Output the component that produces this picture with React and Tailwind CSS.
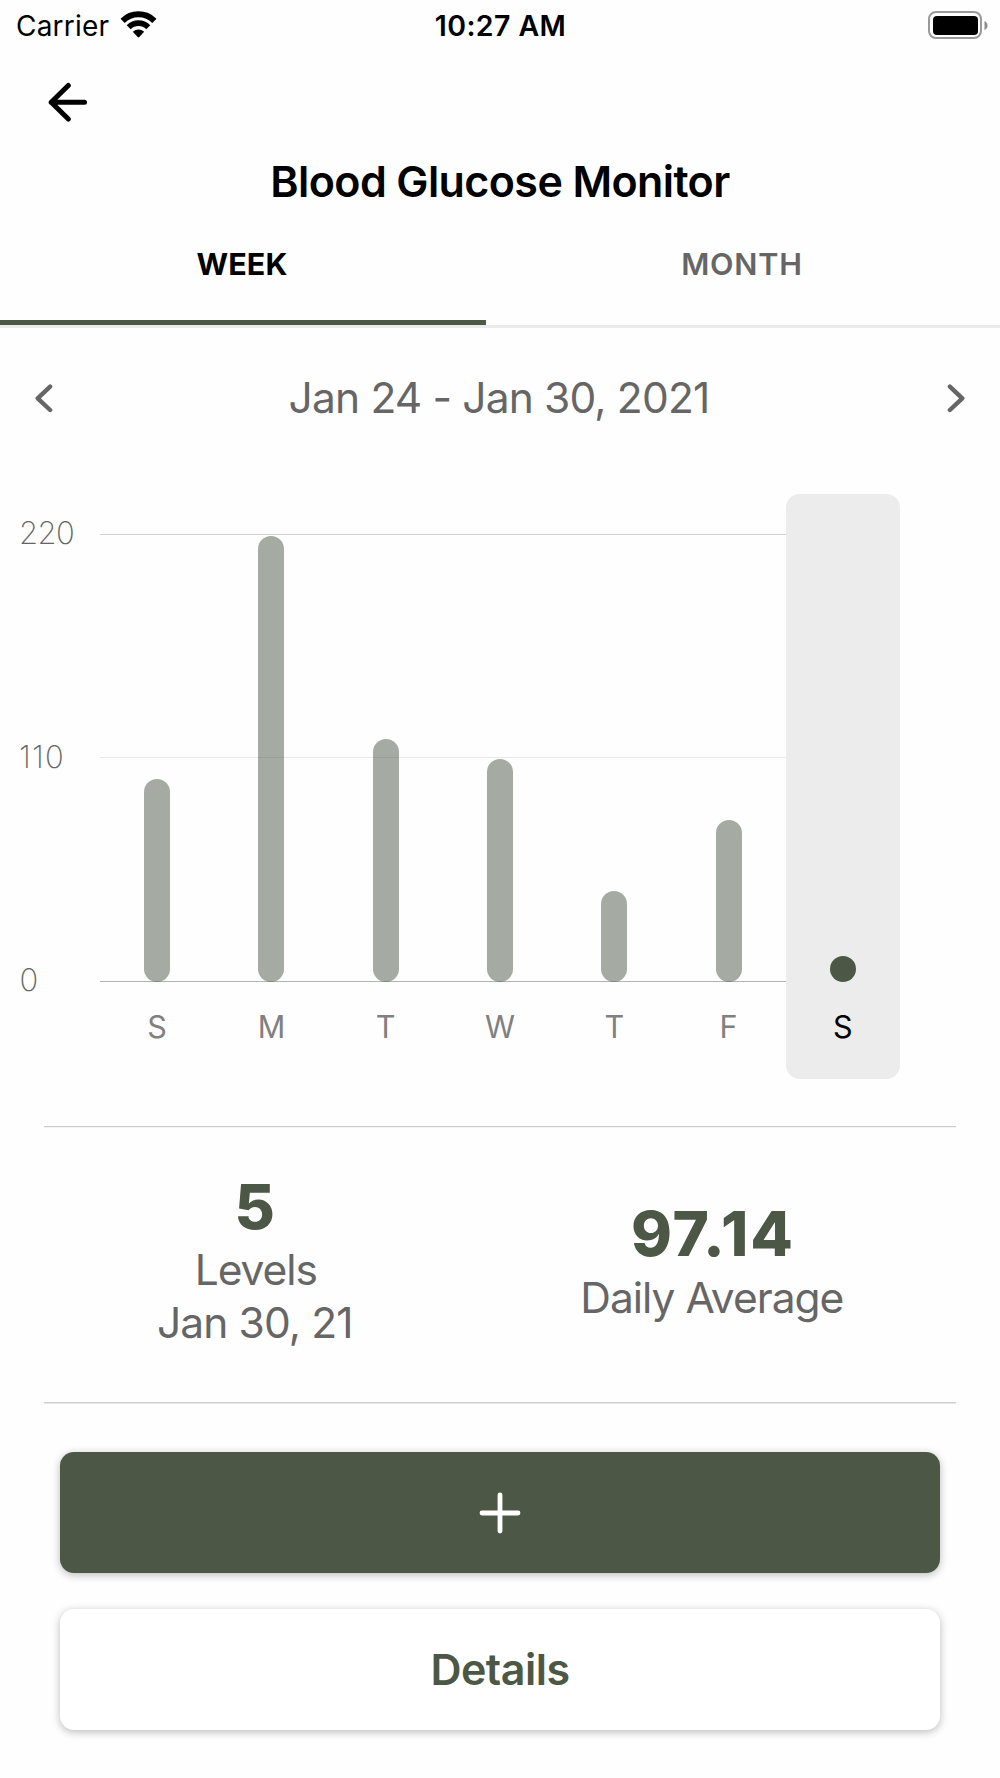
import React from 'react';

const days = [
  { label: 'S', height: 203 },
  { label: 'M', height: 446.5 },
  { label: 'T', height: 243 },
  { label: 'W', height: 223 },
  { label: 'T', height: 91 },
  { label: 'F', height: 162 },
  { label: 'S', height: 26, selected: true },
];

function WifiIcon() {
  return (
    <svg className="ml-[11px] mb-[3px] h-[27px] w-[37px]" viewBox="0 0 37 27" fill="none">
      <path d="M2.6 9.8 A22.6 22.6 0 0 1 34.4 9.8" stroke="#000" strokeWidth="5.9" />
      <path d="M8.7 16.2 A13.8 13.8 0 0 1 28.3 16.2" stroke="#000" strokeWidth="5.6" />
      <path d="M12.8 20.8 Q18.5 16.4 24.2 20.8 L19.3 26 Q18.5 26.8 17.7 26 Z" fill="#000" />
    </svg>
  );
}

function StatusBar() {
  return (
    <div className="flex h-[51px] items-center justify-between pr-[12px] pl-[16px] text-black">
      <div className="flex w-[300px] items-center">
        <span className="text-[28px] tracking-[0.2px]">Carrier</span>
        <WifiIcon />
      </div>
      <span className="pt-[1px] pr-[3px] text-[28.5px] font-[560] tracking-[0.4px]">10:27 AM</span>
      <div className="flex w-[300px] items-center justify-end pb-[1px]">
        <div className="h-[28px] w-[54px] rounded-[8px] border-2 border-[#999] p-[2.5px]">
          <div className="h-full rounded-[4px] bg-black" />
        </div>
        <svg className="ml-[2px] h-[9px] w-[4px]" viewBox="0 0 4 9">
          <path d="M0.5 0 Q3.5 1.5 3.5 4.5 T0.5 9 Z" fill="#8c8c8c" />
        </svg>
      </div>
    </div>
  );
}

function Chevron({ right }) {
  return (
    <svg className="h-[29px] w-[18px]" viewBox="0 0 18 29" fill="none" stroke="#666" strokeWidth="4.4" strokeLinecap="round" strokeLinejoin="round">
      <path d={right ? 'M2.9 2.6 L15.3 14.3 L2.9 26' : 'M15.1 2.6 L2.7 14.3 L15.1 26'} />
    </svg>
  );
}

function Chart() {
  return (
    <div className="flex pt-[26px] pb-[47px]">
      <div className="flex w-[100px] flex-col gap-[183.5px] pt-[19px] pl-[19px] text-[31px] leading-[40px] font-extralight text-[#666]">
        <span className="tracking-[-0.6px]">220</span>
        <span className="tracking-[1.2px]">110</span>
        <span className="pl-[0.5px]">0</span>
      </div>
      <div className="relative flex h-[585px] w-[800px]">
        <div className="absolute top-[40px] left-0 h-px w-full bg-[#cfcfcf]" />
        <div className="absolute top-[263px] left-0 h-px w-full bg-[#e9e9e9]" />
        <div className="absolute top-[487px] left-0 h-px w-full bg-[#b2b2b2]" />
        {days.map((d, i) => (
          <div key={i} className={`relative flex flex-1 flex-col items-center ${d.selected ? 'rounded-[14px] bg-[#ececec]' : ''}`}>
            <div className="flex h-[488px] items-end">
              <div className={`w-[26px] rounded-full ${d.selected ? 'bg-[#4c5845]' : 'bg-[#4c5845]/50'}`} style={{ height: d.height }} />
            </div>
            <span className={`mt-[25px] text-[30.5px] leading-[40px] ${d.selected ? 'text-black' : 'text-[#808080]'}`}>{d.label}</span>
          </div>
        ))}
      </div>
    </div>
  );
}

export default function App() {
  return (
    <div className="flex h-[1778px] w-[1000px] flex-col overflow-hidden bg-[#fefefe] font-['Inter',sans-serif] text-[#666]">
      <StatusBar />
      <div className="flex h-[102px] items-center pl-[48px]">
        <svg className="h-[40px] w-[40px]" viewBox="0 0 40 40" fill="none" stroke="#000" strokeWidth="5" strokeLinecap="round" strokeLinejoin="round">
          <path d="M36.5 20.3 H3.2 M20.3 3.5 L3.2 20.3 L20.3 37" />
        </svg>
      </div>
      <h1 className="h-[57px] text-center text-[43px] leading-[56px] font-[560] tracking-[-0.6px] text-black">Blood Glucose Monitor</h1>

      <div className="relative flex h-[118px] border-b-[3px] border-[#ebebeb] text-[30.5px] leading-[108px]">
        <div className="w-[484px] text-center font-bold tracking-[0.1px] text-black">WEEK</div>
        <div className="flex-1 text-center font-semibold tracking-[0.8px]">MONTH</div>
        <div className="absolute bottom-0 left-0 h-[5px] w-[485.5px] bg-[#4c5845]" />
      </div>

      <div className="flex h-[140px] items-center justify-between pr-[35px] pl-[35px]">
        <Chevron />
        <span className="pr-[2px] text-[42.5px] tracking-[-0.85px]">Jan 24 - Jan 30, 2021</span>
        <Chevron right />
      </div>

      <Chart />

      <div className="mx-[44px] h-[2px] border-b border-[#f3f3f3] bg-[#cbcbcb]" />
      <div className="mx-[44px] flex h-[263px] items-center text-center text-[42.5px] leading-[53px]">
        <div className="w-[423px]">
          <div className="text-[62px] leading-[73.4px] font-extrabold text-[#4c5845]">5</div>
          <div className="pl-[2px] tracking-[-1.1px]">Levels</div>
          <div className="tracking-[-0.9px]">Jan 30, 21</div>
        </div>
        <div className="w-[492px]">
          <div className="pl-[4px] text-[62px] leading-[75px] font-extrabold tracking-[1.8px] text-[#4c5845]">97.14</div>
          <div className="pl-[2px] tracking-[-1px]">Daily Average</div>
        </div>
      </div>
      <div className="mx-[44px] mt-[11px] h-[2px] border-b border-[#e6e6e6] bg-[#cfcfcf]" />

      <div className="mx-[60px] mt-[48px] flex flex-col gap-[36px]">
        <button className="flex h-[121px] items-center justify-center rounded-[14px] bg-[#4c5845] shadow-[0_2px_8px_rgba(0,0,0,0.27)]">
          <svg className="h-[42px] w-[42px]" viewBox="0 0 42 42" stroke="#fff" strokeWidth="4.8" strokeLinecap="round">
            <path d="M21 3 V39 M3 21 H39" />
          </svg>
        </button>
        <button className="h-[121px] rounded-[14px] bg-white text-[43px] font-[560] tracking-[-0.5px] text-[#4c5845] shadow-[0_2px_8px_rgba(0,0,0,0.27)]">Details</button>
      </div>
    </div>
  );
}
